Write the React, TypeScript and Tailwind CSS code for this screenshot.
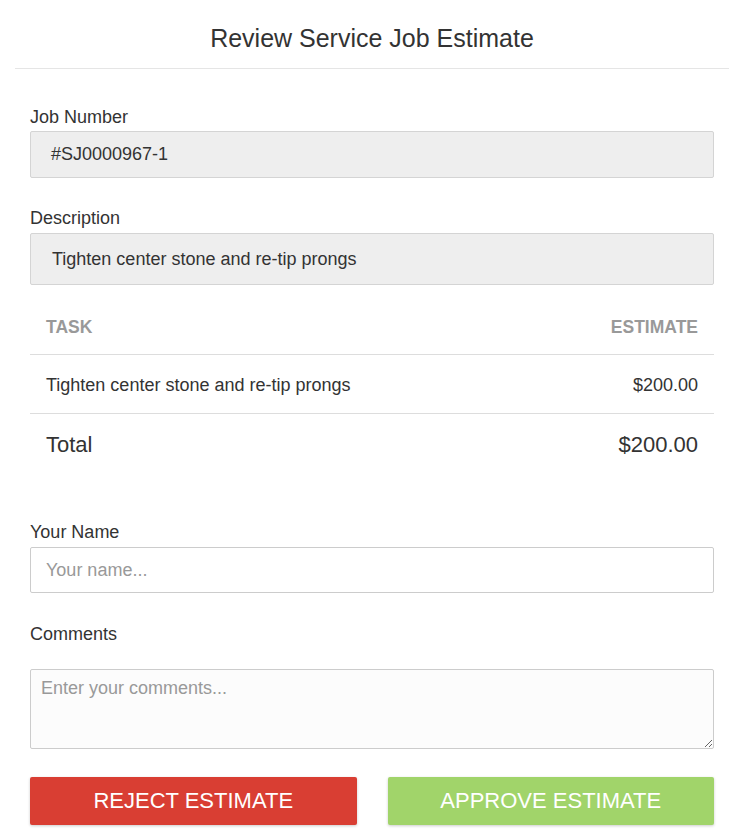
export default function App() {
  return (
    <div className="min-h-screen bg-white font-['Liberation_Sans',Arial,sans-serif] text-[#333]">
      <div className="mx-[15px] border-b border-[#e5e5e5] pt-[23px] pb-[15px] text-center">
        <h1 className="text-[25px] leading-[30px]">Review Service Job Estimate</h1>
      </div>

      <div className="px-[30px] pt-[38px]">
        <label className="block h-[20px] text-[18px] leading-[20px]">Job Number</label>
        <div className="mt-[4px] h-[47px] rounded-[2px] border border-[#d4d4d4] bg-[#eee] px-[20px] text-[18px] leading-[45px]">
          #SJ0000967-1
        </div>

        <label className="mt-[30px] block h-[20px] text-[18px] leading-[20px]">Description</label>
        <div className="mt-[5px] h-[52px] rounded-[2px] border border-[#d4d4d4] bg-[#eee] px-[21px] text-[18px] leading-[50px]">
          Tighten center stone and re-tip prongs
        </div>

        <table className="mt-[15px] w-full border-collapse">
          <thead>
            <tr className="border-b border-[#ddd]">
              <th className="h-[54px] px-[16px] text-left text-[17.5px] font-bold uppercase text-[#999]">Task</th>
              <th className="h-[54px] px-[16px] text-right text-[17.5px] font-bold uppercase text-[#999]">Estimate</th>
            </tr>
          </thead>
          <tbody>
            <tr className="border-b border-[#ddd]">
              <td className="h-[59px] px-[16px] pt-[4px] text-[18px]">Tighten center stone and re-tip prongs</td>
              <td className="h-[59px] px-[16px] pt-[4px] text-right text-[18px]">$200.00</td>
            </tr>
            <tr>
              <td className="h-[62px] px-[16px] text-[22px]">Total</td>
              <td className="h-[62px] px-[16px] text-right text-[22px]">$200.00</td>
            </tr>
          </tbody>
        </table>

        <label className="mt-[47px] block h-[20px] text-[18px] leading-[20px]">Your Name</label>
        <input
          placeholder="Your name..."
          className="mt-[5px] block h-[46px] w-full rounded-[2px] border border-[#ccc] bg-white px-[15px] text-[18px] outline-none placeholder:text-[#999]"
        />

        <label className="mt-[31px] block h-[20px] text-[18px] leading-[20px]">Comments</label>
        <textarea
          placeholder="Enter your comments..."
          className="mt-[25px] block h-[80px] w-full rounded-[2px] border border-[#ccc] bg-[#fcfcfc] px-[10px] py-[8px] text-[18px] leading-[20px] outline-none placeholder:text-[#999]"
        />

        <div className="mt-[28px] flex gap-[31px]">
          <button className="h-[48px] flex-1 rounded-[2px] bg-[#d93e33] pb-[2px] text-[22px] uppercase text-white shadow-[0_1px_3px_rgba(0,0,0,0.2)]">
            Reject Estimate
          </button>
          <button className="h-[48px] flex-1 rounded-[2px] bg-[#a1d46a] pb-[2px] text-[22px] uppercase text-white shadow-[0_1px_3px_rgba(0,0,0,0.2)]">
            Approve Estimate
          </button>
        </div>
      </div>
    </div>
  );
}
